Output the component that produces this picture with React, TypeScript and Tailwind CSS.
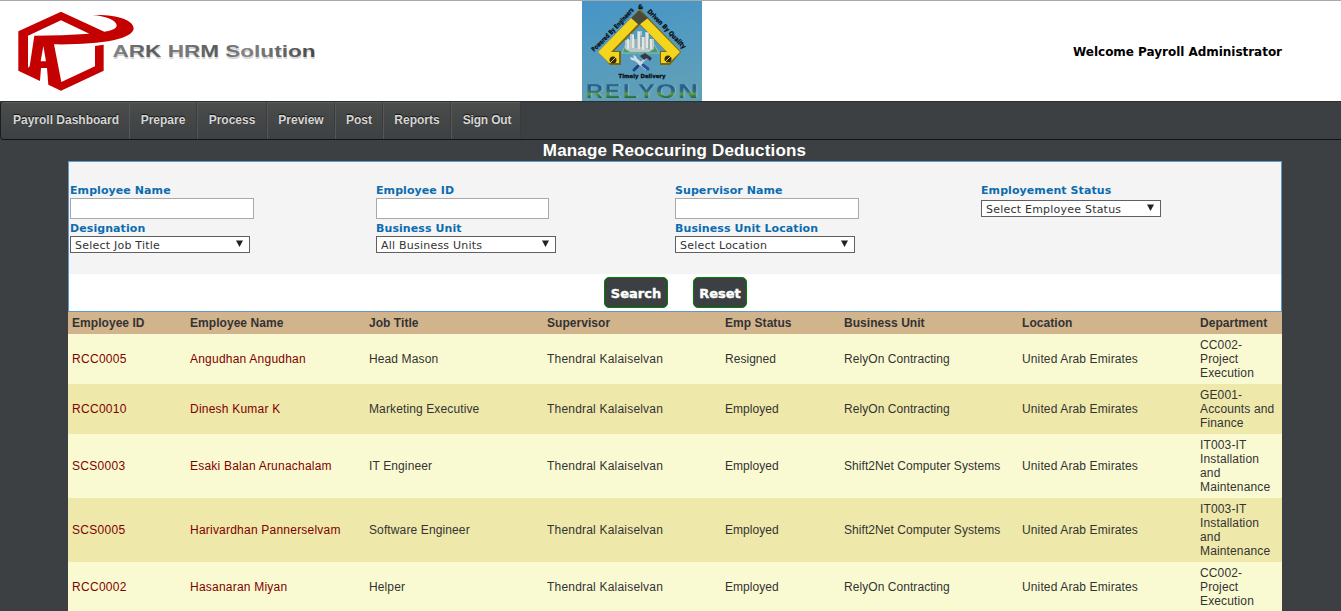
import React from 'react';

const menu: [string, string][] = [
  ['Payroll Dashboard', 'w-[129px] pl-[2px]'],
  ['Prepare', 'w-[68px]'],
  ['Process', 'w-[70px]'],
  ['Preview', 'w-[68px]'],
  ['Post', 'w-[48px]'],
  ['Reports', 'w-[68px]'],
  ['Sign Out', 'w-[70px] pl-[2px] tracking-[-0.2px]'],
];

const columns = ['Employee ID', 'Employee Name', 'Job Title', 'Supervisor', 'Emp Status', 'Business Unit', 'Location', 'Department'];

const tracking = [
  'tracking-[0.3px]',
  'tracking-[0.22px]',
  'tracking-[0.12px]',
  'tracking-[0.2px]',
  'tracking-[0.03px]',
  'tracking-[0.06px]',
  'tracking-[0.13px]',
  'tracking-[0.14px]',
];

const rows: { h: string; cells: string[] }[] = [
  { h: 'h-[50px]', cells: ['RCC0005', 'Angudhan Angudhan', 'Head Mason', 'Thendral Kalaiselvan', 'Resigned', 'RelyOn Contracting', 'United Arab Emirates', 'CC002-\nProject\nExecution'] },
  { h: 'h-[50px]', cells: ['RCC0010', 'Dinesh Kumar K', 'Marketing Executive', 'Thendral Kalaiselvan', 'Employed', 'RelyOn Contracting', 'United Arab Emirates', 'GE001-\nAccounts and\nFinance'] },
  { h: 'h-[64px]', cells: ['SCS0003', 'Esaki Balan Arunachalam', 'IT Engineer', 'Thendral Kalaiselvan', 'Employed', 'Shift2Net Computer Systems', 'United Arab Emirates', 'IT003-IT\nInstallation\nand\nMaintenance'] },
  { h: 'h-[64px]', cells: ['SCS0005', 'Harivardhan Pannerselvam', 'Software Engineer', 'Thendral Kalaiselvan', 'Employed', 'Shift2Net Computer Systems', 'United Arab Emirates', 'IT003-IT\nInstallation\nand\nMaintenance'] },
  { h: 'h-[50px]', cells: ['RCC0002', 'Hasanaran Miyan', 'Helper', 'Thendral Kalaiselvan', 'Employed', 'RelyOn Contracting', 'United Arab Emirates', 'CC002-\nProject\nExecution'] },
];

const grid = 'grid grid-cols-[118px_179px_178px_178px_119px_178px_178px_1fr] items-center pl-1';

function ArkLogo() {
  return (
    <svg width="330" height="100" viewBox="0 1 330 100" className="block shrink-0">
      <defs>
        <linearGradient id="ark" x1="0" x2="1" y1="0" y2="0">
          <stop offset="0" stopColor="#858585" />
          <stop offset=".2" stopColor="#5a5a5a" />
          <stop offset=".32" stopColor="#808080" />
          <stop offset=".5" stopColor="#5a5a5a" />
          <stop offset=".65" stopColor="#858585" />
          <stop offset="1" stopColor="#484848" />
        </linearGradient>
      </defs>
      <g transform="scale(.33333)">
        <path
          fill="#c50000"
          fillRule="evenodd"
          d="M183 35 55 94V212L120 243 123 204H141L145 254 183 272 311 212V134L285 138V199L184 246 162 133C230 134 296 130 340 121C382 112 401 98 401 85C400 61 354 43 278 45C320 49 349 61 350 76C350 86 336 92 313 95ZM183 61 268 101C215 105 158 106 103 107L89 199 84 203V107ZM130 138 138 184H122Z"
        />
      </g>
      <text x="113" y="58.500" fill="#bbb" opacity=".6" fontFamily="Liberation Sans" fontWeight="700" fontSize="16.500" textLength="203" lengthAdjust="spacingAndGlyphs">ARK HRM Solution</text>
      <text x="112.500" y="57.300" fill="url(#ark)" fontFamily="Liberation Sans" fontWeight="700" fontSize="16.500" textLength="203" lengthAdjust="spacingAndGlyphs">ARK HRM Solution</text>
    </svg>
  );
}

const wordmark: [string, number, number][] = [['R', 4, 17], ['E', 23, 15], ['L', 41, 14], ['Y', 56, 17], ['O', 74, 20], ['N', 96, 20]];

function RelyonLogo() {
  return (
    <svg width="120" height="100" viewBox="0 0 120 100" className="block shrink-0">
      <defs>
        <linearGradient id="sky" x1="0" x2=".3" y1="0" y2="1">
          <stop offset="0" stopColor="#4595c8" />
          <stop offset="1" stopColor="#5f9fb8" />
        </linearGradient>
        <linearGradient id="metal" gradientUnits="userSpaceOnUse" x1="0" x2="0" y1="80" y2="97">
          <stop offset="0" stopColor="#3d8a80" />
          <stop offset=".35" stopColor="#275a96" />
          <stop offset=".6" stopColor="#2f6c78" />
          <stop offset=".75" stopColor="#5f9a48" />
          <stop offset="1" stopColor="#246348" />
        </linearGradient>
        <path id="leftArc" d="M12 51Q34 30 54 7" />
        <path id="rightArc" d="M65 11Q83 29 102 49" />
      </defs>
      <rect width="120" height="100" fill="url(#sky)" />
      <path d="M58 8 16 51 28 64H39V50H32L58 24 84 50H78V64H88L99 51Z" fill="#7c6510" />
      <path d="M57 9 16 51 27 62H37V51H29L57 22 85 51H79V62H87L98 51Z" fill="#f2d51c" />
      <path d="M49 17 57 9 66 17 57 24Z" fill="#4a4a3c" />
      <path d="M45 40H70L77 52H40Z" fill="#4b9a68" stroke="#a7d9bb" strokeWidth=".7" />
      <path d="M43 48V39H48V33H52V38H55V30H60V36H63V31H67V38H72V48L67 51H48Z" fill="#b9c7c8" />
      <path d="M46 38V48M51 34V47M57 31V48M61 36V49M65 32V47M69 38V48" stroke="#edf3ed" strokeWidth="1.500" />
      <path d="M54 37V47M59 34V46M67 38V48" stroke="#7c9698" strokeWidth="1" />
      <circle cx="31" cy="59" r="3.500" fill="#302d10" />
      <path d="m28 62 6-6" stroke="#e6ca2e" />
      <circle cx="86" cy="58" r="3.500" fill="#302d10" />
      <path d="m83 61 6-6" stroke="#e6ca2e" />
      <path d="m52 57 13 11" stroke="#d4dde2" strokeWidth="3" />
      <path d="M48 56q1 5 6 3q2-4-3-5l1 3Z" fill="#d4dde2" />
      <path d="m61 64 5 4" stroke="#27509a" strokeWidth="3" strokeLinecap="round" />
      <path d="m64 57-9 9" stroke="#ccd6dc" strokeWidth="2" />
      <path d="m56 65-4 4" stroke="#1f3f80" strokeWidth="3" strokeLinecap="round" />
      <path d="m58 55 5-3 7 5-2 3-3-3-3 2Z" fill="#333b43" />
      <g fontFamily="DejaVu Sans" fontWeight="700" fill="#080c0f" stroke="#080c0f" strokeWidth=".25">
        <text fontSize="6.500"><textPath href="#leftArc" textLength="58" lengthAdjust="spacingAndGlyphs">Powered By Engineers</textPath></text>
        <text fontSize="6.500"><textPath href="#rightArc" textLength="52" lengthAdjust="spacingAndGlyphs">Driven By Quality</textPath></text>
        <text x="56" y="8" fontSize="6">&amp;</text>
        <text x="36.500" y="77" fontSize="5.500" textLength="47" lengthAdjust="spacingAndGlyphs">Timely Delivery</text>
      </g>
      <g fontFamily="Liberation Sans" fontWeight="700" fontSize="20">
        <text y="97" fill="#a3cfbd" opacity=".6">
          {wordmark.map(([c, x, w]) => <tspan key={c} x={x + 1} textLength={w} lengthAdjust="spacingAndGlyphs">{c}</tspan>)}
        </text>
        <text y="96.500" fill="url(#metal)">
          {wordmark.map(([c, x, w]) => <tspan key={c} x={x} textLength={w} lengthAdjust="spacingAndGlyphs">{c}</tspan>)}
        </text>
      </g>
    </svg>
  );
}

function Label({ children }: { children: string }) {
  return <label className="block h-[15px] whitespace-nowrap text-[11px] leading-[15px] font-bold tracking-[0.08px] text-[#0c6cb0]">{children}</label>;
}

function Field({ label, width }: { label: string; width: string }) {
  return (
    <div className="h-[38px]">
      <Label>{label}</Label>
      <input aria-label={label} className={`block h-[21px] border border-[#a9a9a9] bg-white outline-none ${width}`} />
    </div>
  );
}

function Select({ label, value, gap = '' }: { label: string; value: string; gap?: string }) {
  return (
    <div className="h-[38px]">
      <Label>{label}</Label>
      <div className={`flex h-[17px] w-[180px] items-center justify-between border border-[#606060] bg-white pr-[6px] pl-1 text-[11px] leading-[15px] tracking-[0.22px] text-[#333] ${gap}`}>
        <span className="whitespace-nowrap pt-px">{value}</span>
        <svg width="7" height="7" viewBox="0 0 7 7" className="mb-[2px]"><path d="M0 .5h7L3.500 7Z" fill="#222" /></svg>
      </div>
    </div>
  );
}

export default function App() {
  return (
    <div className="h-[611px] w-[1341px] overflow-hidden bg-[#3c4042] font-['Liberation_Sans',Arial,sans-serif]">
      <header className="flex h-[101px] border-t border-[#a9a9a9] bg-white">
        <ArkLogo />
        <div className="ml-[252px]"><RelyonLogo /></div>
        <div className="mt-[43px] ml-auto mr-[59px] h-4 font-['DejaVu_Sans',Verdana,sans-serif] text-[12px] leading-4 font-bold tracking-[-0.03px] whitespace-nowrap text-black">Welcome Payroll Administrator</div>
      </header>
      <nav className="flex h-[39px] rounded-l-[4px] border-t border-b border-l border-t-[#2c2f30] border-b-[#101314] border-l-[#1b1e20] bg-[#3c4042]">
        {menu.map(([name, width], i) => (
          <a key={name} className={`flex items-center justify-center border-t border-r border-t-[#5a5c5b] border-r-[#383b3c] bg-linear-to-b from-[#4b4c4b] to-[#3d4143] pb-[2px] text-[12px] font-bold whitespace-nowrap text-[#d6d6d6] [text-shadow:0_-1px_1px_#111] ${width} ${i === 0 ? '-mr-px rounded-l-[4px]' : 'border-l border-l-[#555857]'}`}>{name}</a>
        ))}
      </nav>
      <h1 className="h-[21px] pl-[8px] text-center text-[17px] leading-[21px] font-bold tracking-[0.16px] text-white">Manage Reoccuring Deductions</h1>
      <main className="ml-[68px] w-[1214px]">
        <form className="h-[151px] border border-[#6197cd] bg-white font-['DejaVu_Sans',Verdana,sans-serif]">
          <div className="grid h-[112px] grid-cols-[306px_299px_306px_1fr] grid-rows-[38px_38px] bg-[#f4f4f4] pt-[21px] pl-px">
            <Field label="Employee Name" width="w-[184px]" />
            <Field label="Employee ID" width="w-[173px]" />
            <Field label="Supervisor Name" width="w-[184px]" />
            <Select label="Employement Status" value="Select Employee Status" gap="mt-[2px]" />
            <Select label="Designation" value="Select Job Title" />
            <Select label="Business Unit" value="All Business Units" />
            <Select label="Business Unit Location" value="Select Location" />
          </div>
          <div className="flex gap-[25px] pt-[3px] pl-[535px]">
            <button type="button" className="h-[31px] w-16 rounded-[5px] border border-[#008000] bg-[#3c4042] pt-[2px] text-[13px] font-bold text-white [-webkit-text-stroke:0.4px_white]">Search</button>
            <button type="button" className="h-[31px] w-[54px] rounded-[5px] border border-[#008000] bg-[#3c4042] pt-[2px] text-[13px] font-bold text-white [-webkit-text-stroke:0.4px_white]">Reset</button>
          </div>
        </form>
        <section className="text-[12px] leading-[14px] text-[#333]">
          <div className={`${grid} h-[22px] bg-[#d2b48c] font-bold`}>
            {columns.map((c) => <span key={c} className="whitespace-nowrap tracking-[0.05px]">{c}</span>)}
          </div>
          {rows.map((r, i) => (
            <div key={r.cells[0]} className={`${grid} ${r.h} ${i % 2 ? 'bg-[#eee8aa]' : 'bg-[#fafad2]'}`}>
              {r.cells.map((c, j) => <span key={j} className={`whitespace-pre ${tracking[j]} ${j < 2 ? 'text-[#800000]' : ''}`}>{c}</span>)}
            </div>
          ))}
        </section>
      </main>
    </div>
  );
}
